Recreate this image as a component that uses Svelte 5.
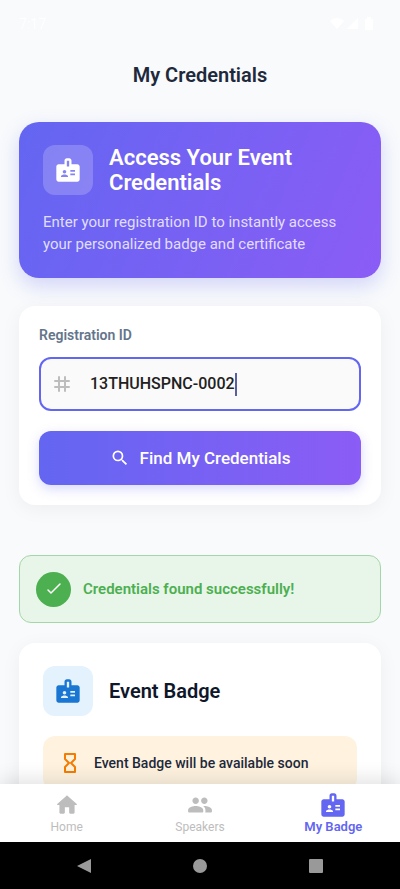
<script lang="ts">
	const badgePath =
		'M20 7h-5V4c0-1.1-.9-2-2-2h-2c-1.1 0-2 .9-2 2v3H4c-1.1 0-2 .9-2 2v11c0 1.1.9 2 2 2h16c1.1 0 2-.9 2-2V9c0-1.1-.9-2-2-2zM9 12c.83 0 1.5.67 1.5 1.5S9.83 15 9 15s-1.5-.67-1.5-1.5S8.17 12 9 12zm3 6H6v-.75c0-1 2-1.5 3-1.5s3 .5 3 1.5V18zm1-9h-2V4h2v5zm5 7.5h-4V15h4v1.5zm0-3h-4V12h4v1.5z';

	const tabs = [
		{
			label: 'Home',
			size: 26,
			path: 'M10 19v-5h4v5c0 .55.45 1 1 1h3c.55 0 1-.45 1-1v-7h1.7c.46 0 .68-.57.33-.87L12.67 3.6c-.38-.34-.96-.34-1.34 0l-8.36 7.53c-.34.3-.13.87.33.87H5v7c0 .55.45 1 1 1h3c.55 0 1-.45 1-1z'
		},
		{
			label: 'Speakers',
			size: 26,
			path: 'M16 11c1.66 0 2.99-1.34 2.99-3S17.66 5 16 5s-3 1.34-3 3 1.34 3 3 3zm-8 0c1.66 0 2.99-1.34 2.99-3S9.66 5 8 5 5 6.34 5 8s1.34 3 3 3zm0 2c-2.33 0-7 1.17-7 3.5V18c0 .55.45 1 1 1h12c.55 0 1-.45 1-1v-1.5c0-2.33-4.67-3.5-7-3.5zm8 0c-.29 0-.62.02-.97.05.02.01.03.03.04.04 1.14.83 1.93 1.94 1.93 3.41V18c0 .35-.07.69-.18 1H22c.55 0 1-.45 1-1v-1.5c0-2.33-4.67-3.5-7-3.5z'
		},
		{ label: 'My Badge', size: 28, path: badgePath }
	];

	let registrationId = $state('13THUHSPNC-0002');
	let found = $state(true);
	let active = $state('My Badge');

	function find(e: SubmitEvent) {
		e.preventDefault();
		found = registrationId.trim().length > 0;
	}
</script>

{#snippet icon(path: string, size: number)}
	<svg width={size} height={size} viewBox="0 0 24 24" fill="currentColor" aria-hidden="true">
		<path d={path} />
	</svg>
{/snippet}

<div class="screen">
	<div class="status">
		<span>7:17</span>
		<svg width="44" height="16" viewBox="0 0 44 16" fill="#fff" aria-hidden="true">
			<path d="M0 5C4 1 10 1 14 5L7 13z" />
			<path d="M28 2v11H17z" />
			<path d="M35 3h2V1h4v2h2v11h-8z" />
		</svg>
	</div>

	<header>
		<h1>My Credentials</h1>
	</header>

	<main>
		<section class="hero">
			<div class="heading">
				<div class="tile">{@render icon(badgePath, 28)}</div>
				<h2>Access Your Event Credentials</h2>
			</div>
			<p>Enter your registration ID to instantly access your personalized badge and certificate</p>
		</section>

		<form class="card lookup" onsubmit={find}>
			<label for="registration">Registration ID</label>
			<div class="field">
				<svg width="24" height="24" viewBox="0 0 24 24" aria-hidden="true">
					<path
						d="M9 5v14M15 5v14M5 9h14M5 15h14"
						fill="none"
						stroke="currentColor"
						stroke-width="2"
						stroke-linecap="round"
					/>
				</svg>
				<div class="entry">
					<input id="registration" type="text" bind:value={registrationId} />
					<span class="caret"></span>
				</div>
			</div>
			<button class="find" type="submit">
				{@render icon(
					'M15.5 14h-.79l-.28-.27A6.47 6.47 0 0 0 16 9.5 6.5 6.5 0 1 0 9.5 16c1.61 0 3.09-.59 4.23-1.57l.27.28v.79l5 4.99L20.49 19l-4.99-5zm-6 0C7.01 14 5 11.99 5 9.5S7.01 5 9.5 5 14 7.01 14 9.5 11.99 14 9.5 14z',
					20
				)}
				Find My Credentials
			</button>
		</form>

		{#if found}
			<div class="success" role="status">
				<span class="check">
					<svg width="20" height="20" viewBox="0 0 20 20" aria-hidden="true">
						<path
							d="M4 11l3 3 9-9"
							fill="none"
							stroke="currentColor"
							stroke-width="1.5"
							stroke-linecap="round"
						/>
					</svg>
				</span>
				Credentials found successfully!
			</div>

			<section class="card">
				<div class="heading">
					<div class="tile blue">{@render icon(badgePath, 28)}</div>
					<h3>Event Badge</h3>
				</div>
				<div class="notice">
					<svg width="24" height="24" viewBox="0 0 24 24" aria-hidden="true">
						<path
							d="M7 3h10v5l-4 4 4 4v5H7v-5l4-4-4-4z"
							fill="none"
							stroke="currentColor"
							stroke-width="2"
							stroke-linejoin="round"
						/>
					</svg>
					Event Badge will be available soon
				</div>
			</section>
		{/if}
	</main>

	<nav class="tabs">
		{#each tabs as tab}
			<button class:active={active === tab.label} onclick={() => (active = tab.label)}>
				<span class="glyph">{@render icon(tab.path, tab.size)}</span>
				{tab.label}
			</button>
		{/each}
	</nav>

	<div class="system">
		<button aria-label="Back">
			<svg width="16" height="16" viewBox="0 0 16 16"><path d="M15 1v14L1 8z" /></svg>
		</button>
		<button aria-label="Home screen">
			<svg width="16" height="16" viewBox="0 0 16 16"><circle cx="8" cy="8" r="7" /></svg>
		</button>
		<button aria-label="Recent apps">
			<svg width="16" height="16" viewBox="0 0 16 16">
				<rect x="1" y="1" width="14" height="14" rx="1" />
			</svg>
		</button>
	</div>
</div>

<style>
	:global(body) {
		margin: 0;
	}

	.screen {
		display: flex;
		flex-direction: column;
		height: 100vh;
		overflow: hidden;
		background: #f8fafc;
		color: #1e293b;
		font-family: Roboto, 'Liberation Sans', sans-serif;
	}

	.screen :global(*) {
		box-sizing: border-box;
	}

	svg {
		display: block;
		flex: none;
	}

	h1,
	h2,
	h3,
	p {
		margin: 0;
	}

	button {
		border: 0;
		padding: 0;
		background: none;
		font-family: inherit;
		cursor: pointer;
	}

	.status {
		display: flex;
		flex: none;
		align-items: center;
		justify-content: space-between;
		height: 48px;
		padding: 0 26px 0 19px;
		color: #fff;
		font-size: 14px;
	}

	header {
		display: flex;
		flex: none;
		align-items: center;
		justify-content: center;
		height: 54px;
	}

	h1 {
		font-size: 20px;
		font-weight: 600;
		line-height: 24px;
	}

	main {
		flex: 1;
		min-height: 0;
		padding: 20px 19px;
		overflow: hidden;
	}

	.hero {
		padding: 23px 24px;
		border-radius: 20px;
		background: linear-gradient(113deg, #6366f1, #8b5cf6);
		box-shadow: 0 8px 20px rgba(99, 102, 241, 0.25);
		color: #fff;
	}

	.heading {
		display: flex;
		align-items: center;
		gap: 16px;
	}

	.tile {
		display: grid;
		flex: none;
		place-items: center;
		width: 50px;
		height: 50px;
		border-radius: 12px;
		background: rgba(255, 255, 255, 0.2);
	}

	.tile.blue {
		background: #e3f2fd;
		color: #1976d2;
	}

	h2 {
		font-size: 22px;
		font-weight: 600;
		line-height: 25px;
	}

	.hero p {
		margin-top: 16px;
		color: rgba(255, 255, 255, 0.8);
		font-size: 15px;
		line-height: 22px;
	}

	.card {
		padding: 23px 24px;
		border-radius: 16px;
		background: #fff;
		box-shadow: 0 4px 20px rgba(0, 0, 0, 0.05);
	}

	.lookup {
		margin-top: 28px;
		padding: 20px;
	}

	label {
		display: block;
		color: #64748b;
		font-size: 14px;
		font-weight: 600;
		line-height: 18px;
	}

	.field {
		display: flex;
		align-items: center;
		gap: 16px;
		height: 54px;
		margin-top: 13px;
		padding: 0 9px;
		border: 2px solid #6366f1;
		border-radius: 12px;
		background: #fafafa;
		color: #bdbdbd;
	}

	.entry {
		display: flex;
		flex: 1;
		align-items: center;
		min-width: 0;
	}

	input {
		field-sizing: content;
		max-width: 100%;
		border: 0;
		padding: 0;
		outline: none;
		background: none;
		color: #212121;
		caret-color: transparent;
		font-family: inherit;
		font-size: 16px;
		font-weight: 500;
		line-height: 24px;
	}

	.caret {
		width: 2px;
		height: 23px;
		background: #5c5f9f;
	}

	.find {
		display: flex;
		align-items: center;
		justify-content: center;
		gap: 10px;
		width: 100%;
		height: 54px;
		margin-top: 20px;
		border-radius: 12px;
		background: linear-gradient(to right, #6366f1, #8b5cf6);
		box-shadow: 0 4px 12px rgba(99, 102, 241, 0.25);
		color: #fff;
		font-size: 17px;
		font-weight: 500;
	}

	.success {
		display: flex;
		align-items: center;
		gap: 12px;
		height: 68px;
		margin: 50px 0 20px;
		padding: 0 16px;
		border: 1px solid #a5d6a7;
		border-radius: 12px;
		background: #e8f5e9;
		color: #4caf50;
		font-size: 15px;
		font-weight: 600;
	}

	.check {
		display: grid;
		flex: none;
		place-items: center;
		width: 35px;
		height: 35px;
		border-radius: 50%;
		background: #4caf50;
		color: #fff;
	}

	h3 {
		color: #0f172a;
		font-size: 20px;
		font-weight: 600;
		line-height: 24px;
	}

	.notice {
		display: flex;
		align-items: center;
		gap: 12px;
		height: 54px;
		margin-top: 20px;
		padding: 0 15px;
		border-radius: 12px;
		background: #fff3e0;
		font-size: 14px;
		font-weight: 500;
	}

	.notice svg {
		color: #f57c00;
	}

	.tabs {
		position: relative;
		display: flex;
		flex: none;
		height: 58px;
		background: #fff;
		box-shadow: 0 -4px 20px rgba(0, 0, 0, 0.12);
	}

	.tabs button {
		flex: 1;
		color: #bdbdbd;
		font-size: 12px;
		line-height: 16px;
	}

	.tabs .active {
		color: #6366f1;
		font-size: 13px;
		font-weight: 600;
	}

	.glyph {
		display: grid;
		place-items: center;
		height: 28px;
	}

	.system {
		display: flex;
		flex: none;
		align-items: center;
		justify-content: center;
		gap: 100px;
		height: 47px;
		background: #000;
	}

	.system svg {
		fill: #999;
	}
</style>
